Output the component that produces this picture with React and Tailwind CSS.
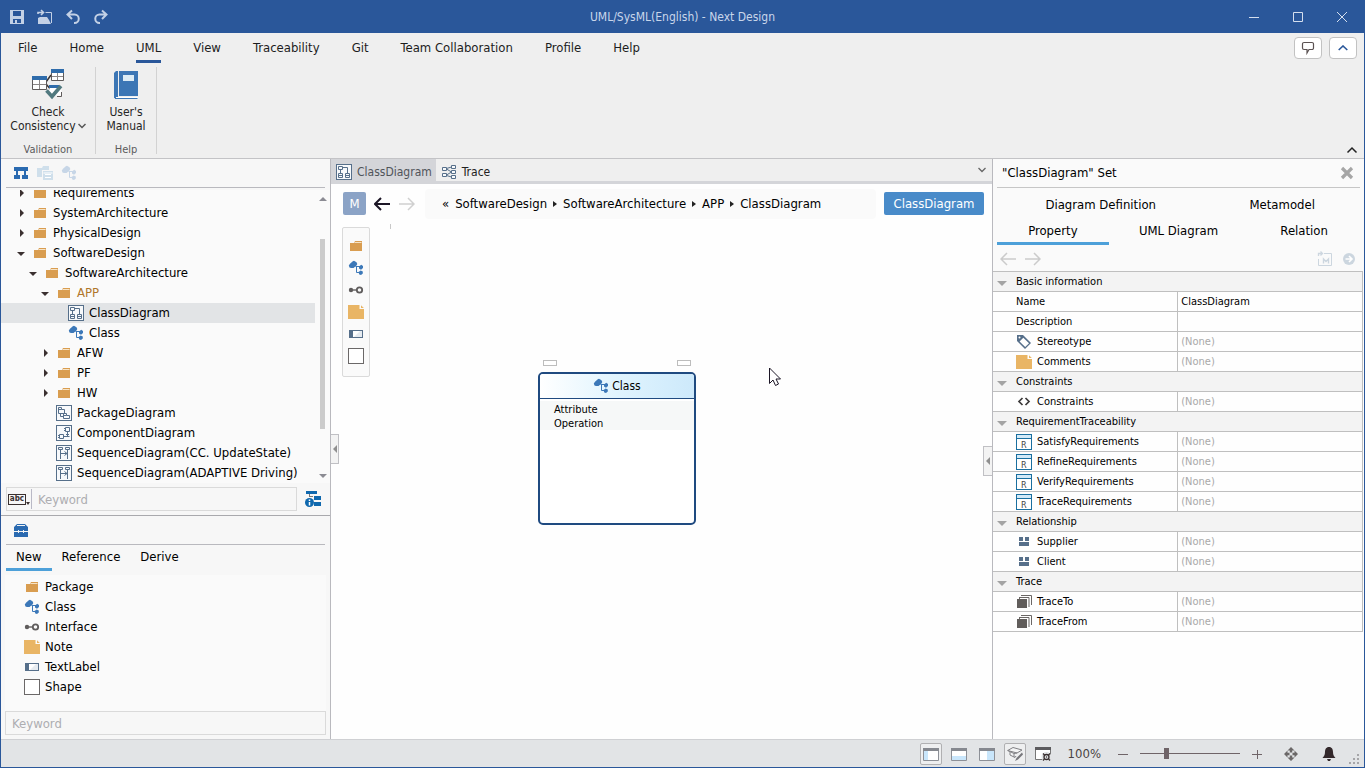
import { useState } from 'react';

const SLATE = '#566f8a';

const menus = ['File', 'Home', 'UML', 'View', 'Traceability', 'Git', 'Team Collaboration', 'Profile', 'Help'];

const treeItems = [
  { label: 'Requirements', icon: 'package', level: 0, state: 'closed' },
  { label: 'SystemArchitecture', icon: 'package', level: 0, state: 'closed' },
  { label: 'PhysicalDesign', icon: 'package', level: 0, state: 'closed' },
  { label: 'SoftwareDesign', icon: 'package', level: 0, state: 'open' },
  { label: 'SoftwareArchitecture', icon: 'package', level: 1, state: 'open' },
  { label: 'APP', icon: 'package', level: 2, state: 'open', edited: true },
  { label: 'ClassDiagram', icon: 'classDiagram', level: 3 },
  { label: 'Class', icon: 'class', level: 3 },
  { label: 'AFW', icon: 'package', level: 2, state: 'closed' },
  { label: 'PF', icon: 'package', level: 2, state: 'closed' },
  { label: 'HW', icon: 'package', level: 2, state: 'closed' },
  { label: 'PackageDiagram', icon: 'packageDiagram', level: 2 },
  { label: 'ComponentDiagram', icon: 'componentDiagram', level: 2 },
  { label: 'SequenceDiagram(CC. UpdateState)', icon: 'sequenceDiagram', level: 2 },
  { label: 'SequenceDiagram(ADAPTIVE Driving)', icon: 'sequenceDiagram', level: 2 },
];

const indents = ['pl-[15px]', 'pl-[27px]', 'pl-[39px]', 'pl-[51px]'];

const tools = [
  { label: 'Package', icon: 'package' },
  { label: 'Class', icon: 'class' },
  { label: 'Interface', icon: 'interface' },
  { label: 'Note', icon: 'note' },
  { label: 'TextLabel', icon: 'textLabel' },
  { label: 'Shape', icon: 'shape' },
];

const propertyGroups = [
  {
    title: 'Basic information',
    rows: [
      { name: 'Name', value: 'ClassDiagram' },
      { name: 'Description', value: '' },
      { name: 'Stereotype', icon: 'tag' },
      { name: 'Comments', icon: 'note' },
    ],
  },
  { title: 'Constraints', rows: [{ name: 'Constraints', icon: 'code' }] },
  {
    title: 'RequirementTraceability',
    rows: [
      { name: 'SatisfyRequirements', icon: 'requirement' },
      { name: 'RefineRequirements', icon: 'requirement' },
      { name: 'VerifyRequirements', icon: 'requirement' },
      { name: 'TraceRequirements', icon: 'requirement' },
    ],
  },
  {
    title: 'Relationship',
    rows: [
      { name: 'Supplier', icon: 'relation' },
      { name: 'Client', icon: 'relation' },
    ],
  },
  {
    title: 'Trace',
    rows: [
      { name: 'TraceTo', icon: 'stack' },
      { name: 'TraceFrom', icon: 'stack' },
    ],
  },
];

function Svg({ w = 16, h = 16, children }) {
  return (
    <svg width={w} height={h} viewBox={`0 0 ${w} ${h}`} fill="none" className="block shrink-0" aria-hidden="true">
      {children}
    </svg>
  );
}

function DiagramFrame({ children }) {
  return (
    <Svg>
      <rect x="0.5" y="0.5" width="15" height="15" fill="#f7f9fb" stroke={SLATE} />
      <g stroke={SLATE}>{children}</g>
    </Svg>
  );
}

const icons = {
  package: (
    <Svg>
      <path d="M2 5h4l1-2h7v10H2z" fill="#d99d50" />
      <path d="M6.5 4.5h7" stroke="#f6e3c6" />
    </Svg>
  ),
  class: (
    <Svg>
      <path d="M.8 5.5 2 3.7 4.800 1.200 6 .8 8.500 2.200 9.300 4 8.500 5.500 5.500 8H3L1.500 7.500zM11 6.500 13.200 4.800 15 6v2L13 9.700 11 8.500zM10.500 12l2.200-1.600 2.100 1.100v2L13 15l-1.700-.6z" fill="#3c78b8" />
      <path d="M7.500 6.500H12M8.500 6.500v6h3" stroke="#3c78b8" />
    </Svg>
  ),
  interface: (
    <Svg>
      <circle cx="3" cy="8" r="2.2" fill="#5f5c5c" />
      <path d="M5 8h4" stroke="#5f5c5c" strokeWidth="1.4" />
      <circle cx="11.5" cy="8" r="2.7" stroke="#5f5c5c" strokeWidth="1.8" />
    </Svg>
  ),
  note: (
    <Svg>
      <path d="M0 1h11.5v4H16v10H0z" fill="#e9b565" />
      <path d="M13 1.2 15.8 4H13z" fill="#e9b565" />
    </Svg>
  ),
  textLabel: (
    <Svg>
      <rect x="1.5" y="4.5" width="13" height="7" fill="#fff" stroke={SLATE} />
      <path d="M6 11 12 5h2v6z" fill="#e6ebf0" />
      <path d="M1 4h4v8H1z" fill={SLATE} />
    </Svg>
  ),
  shape: (
    <Svg>
      <rect x="0.5" y="0.5" width="15" height="15" fill="#fff" stroke="#6b6868" />
    </Svg>
  ),
  classDiagram: (
    <DiagramFrame>
      <path d="M2.5 2.5h4v3h-4zM2.5 9.5h4v4h-4zM9.5 9.5h4v4h-4zM4.5 5.5v4M6.500 3.500h5v6M2.500 11.500h4M9.500 11.500h4" />
    </DiagramFrame>
  ),
  packageDiagram: (
    <DiagramFrame>
      <path d="M2.5 2.5h3v2h3v4h-6zM2.5 4.5h3M7.5 8.5h3v2h3v3h-6zM7.5 10.5h3M4.5 8.5v3h3" />
    </DiagramFrame>
  ),
  componentDiagram: (
    <DiagramFrame>
      <path d="M9.500 2.500h4v4h-4zM8 3.500h1.500M8 5.500h1.500M3.500 9.500h4v4h-4zM2 10.500h1.500M2 12.500h1.500M7.500 11.500h6M11.500 6.500v5M10 9.500h3" />
    </DiagramFrame>
  ),
  sequenceDiagram: (
    <DiagramFrame>
      <path d="M2.5 2.5h4v2h-4zM9.5 2.5h4v2h-4zM4.5 4.5V14M11.5 4.5V14M4.5 8.5H11M8.5 6.5l2.5 2-2.5 2" />
    </DiagramFrame>
  ),
  trace: (
    <Svg>
      <g stroke={SLATE}>
        <path d="M5.500 4.500l5-1.500M5.500 5l5 3M5.500 11l5-3M5.500 11.500l5 1.500" />
        <path d="M1.500 3.500h4v3h-4zM1.500 9.500h4v3h-4zM10.500 1.500h4v3h-4zM10.500 6.500h4v3h-4zM10.500 11.500h4v3h-4z" fill="#f7f9fb" />
      </g>
    </Svg>
  ),
  tag: (
    <Svg>
      <path d="M1 1h6l8 8-6 6-8-8z" fill={SLATE} />
      <path d="m7.3 3.8 5.7 5.5L9.2 13 3.6 7.5z" fill="#fff" />
      <circle cx="3.5" cy="3.5" r="1" fill="#fff" />
    </Svg>
  ),
  code: (
    <Svg>
      <path d="M6.5 4 3 7.5 6.5 11M9.5 4 13 7.5 9.5 11" stroke="#3c3a3a" strokeWidth="1.7" />
    </Svg>
  ),
  requirement: (
    <Svg>
      <rect x="0.5" y="0.5" width="15" height="15" fill="#fff" stroke="#1a6f9f" />
      <path d="M1 1h14v3H1z" fill="#d3eaf8" />
      <path d="M1 4.5h14" stroke="#1a6f9f" />
      <text x="5" y="14" fontSize="9" fill="#444">R</text>
    </Svg>
  ),
  relation: (
    <Svg>
      <path d="M3 3h4v4H3zM9 3h4v4H9zM3 8h10v4H3z" fill={SLATE} />
    </Svg>
  ),
  stack: (
    <Svg>
      <path d="M3 3.5h10V13M5 1.5h10.5V11M3.5 3v2M5.5 1v1" stroke="#6b6765" />
      <path d="M1 5h10v9H1z" fill="#615d5b" />
    </Svg>
  ),
};

function Caret({ open }) {
  return (
    <Svg w={10} h={10}>
      {open ? <path d="M1 4h8L5 8z" fill="#3a3030" /> : <path d="M4 1 8 5 4 9z" fill="#3a3030" />}
    </Svg>
  );
}

function Arrow({ dir = 'left', color = '#d0d0d0', width = 1.4 }) {
  return (
    <Svg>
      {dir === 'left' ? (
        <path d="M16 8H1.5M7 2 1 8l6 6" stroke={color} strokeWidth={width} />
      ) : (
        <path d="M0 8h14.500M9 2l6 6-6 6" stroke={color} strokeWidth={width} />
      )}
    </Svg>
  );
}

function TitleBar() {
  return (
    <header className="h-[33px] shrink-0 grid grid-cols-[1fr_auto_1fr] items-center bg-[#2a579a] text-xs text-[#c9d6ea]">
      <div className="flex items-center gap-3 pl-2">
        <button aria-label="Save" className="flex w-4 justify-center">
          <Svg>
            <path d="M1 1h14v14H1z" fill="#c3d1e6" />
            <path d="M4 2h8v5H4zM4 10h8v4H4z" fill="#2a579a" />
            <path d="M6 11h2v3H6z" fill="#c3d1e6" />
          </Svg>
        </button>
        <button aria-label="Open" className="flex w-4 justify-center">
          <Svg>
            <path d="M1 5V3.500h5M4 1l2.500 2.500L4 6" stroke="#c3d1e6" strokeWidth="1.600" />
            <path d="M8.500 3.500h6V14" stroke="#c3d1e6" />
            <path d="M1 7v2l2-1h7l2 3 2 4H1z" fill="#c3d1e6" />
          </Svg>
        </button>
        <button aria-label="Undo" className="flex w-4 justify-center">
          <Svg>
            <path d="M7 1.500 2.500 5.500 7 10M3 5.500h6.500a4 4 0 0 1 0 8.500H9" stroke="#c3d1e6" strokeWidth="2" />
          </Svg>
        </button>
        <button aria-label="Redo" className="flex w-4 justify-center">
          <Svg>
            <path d="M9 1.500 13.500 5.500 9 10M13 5.500H6.500a4 4 0 0 0 0 8.500H7" stroke="#c3d1e6" strokeWidth="2" />
          </Svg>
        </button>
      </div>
      <h1 className="pt-px">UML/SysML(English) - Next Design</h1>
      <div className="flex justify-end">
        <button aria-label="Minimize" className="flex w-11 justify-center">
          <Svg w={12} h={12}><path d="M1 6.500h10" stroke="#d5dfee" /></Svg>
        </button>
        <button aria-label="Maximize" className="flex w-11 justify-center">
          <Svg w={12} h={12}><path d="M1.500 1.500h9v9h-9z" stroke="#d5dfee" /></Svg>
        </button>
        <button aria-label="Close" className="flex w-11 justify-center">
          <Svg w={12} h={12}><path d="m1 1 10 10M11 1 1 11" stroke="#d5dfee" /></Svg>
        </button>
      </div>
    </header>
  );
}

function Ribbon() {
  const [active, setActive] = useState('UML');
  return (
    <div className="h-[126px] shrink-0 flex flex-col bg-[#efefef] border-b border-[#c3c3c6]">
      <div className="flex items-center justify-between pl-px pr-[7px]">
        <nav className="flex">
          {menus.map((m) => (
            <button key={m} onClick={() => setActive(m)} className="px-4 text-[13px] text-[#1d1d1d]">
              <span
                className={`block h-[30px] leading-[30px] border-b-3 ${
                  m === active ? 'border-[#2a579a]' : 'border-transparent'
                }`}
              >
                {m}
              </span>
            </button>
          ))}
        </nav>
        <div className="flex gap-[7px]">
          <button aria-label="Feedback" className="w-7 h-[22px] flex items-center justify-center bg-white border border-[#c2c2c2] rounded">
            <Svg w={14} h={14}>
              <path d="M3 1.500h8a1.500 1.500 0 0 1 1.500 1.500v4A1.500 1.500 0 0 1 11 8.500H8L6 12V8.500H3A1.500 1.500 0 0 1 1.500 7V3A1.500 1.500 0 0 1 3 1.500z" stroke="#5b5252" strokeWidth="1.200" />
            </Svg>
          </button>
          <button aria-label="Hide menu" className="w-7 h-[22px] flex items-center justify-center bg-white border border-[#c2c2c2] rounded">
            <Svg w={10} h={6}><path d="M.7 5 5 1l4.300 4" stroke="#2a579a" strokeWidth="1.600" /></Svg>
          </button>
        </div>
      </div>
      <div className="flex-1 flex items-stretch py-1 pr-[6px] text-xs">
        <section className="w-[95px] flex flex-col items-center border-r border-[#d2d2d2]">
          <button className="flex flex-col items-center leading-[14px] text-[#262626]">
            <Svg w={34} h={36}>
              <path d="M15 15l5-7M15 17l6 7" stroke="#3a3535" strokeWidth="1.500" />
              <path d="M1.500 9.500h14v13h-14z" fill="#fff" stroke="#5f5b5b" />
              <path d="M8.500 13v9M2 17.500h13" stroke="#8b8787" />
              <path d="M1 9h15v4H1z" fill="#2f6cab" />
              <path d="M20.500 2.500h12v11h-12z" fill="#fff" stroke="#5f5b5b" />
              <path d="M26.500 6v7M21 9.500h11" stroke="#8b8787" />
              <path d="M20 2h13v4H20z" fill="#2f6cab" />
              <path d="M18.500 18.500h12v10h-12z" fill="#fff" />
              <path d="M18 18h10v3H18z" fill="#2f6cab" />
              <path d="M26 29.500h4.500V25" stroke="#5f5b5b" />
              <path d="m15.500 23.500 5.500 6 9-10.500" stroke="#51797f" strokeWidth="3.600" />
            </Svg>
            <span className="mt-0.5">Check</span>
            <span className="flex items-center gap-0.5">
              Consistency
              <Svg w={8} h={6}><path d="m.5 1 3.500 3.500L7.500 1" stroke="#555" strokeWidth="1.500" /></Svg>
            </span>
          </button>
          <h2 className="mt-auto text-[11px] leading-[8px] text-[#5c5c5c]">Validation</h2>
        </section>
        <section className="w-[61px] flex flex-col items-center border-r border-[#d2d2d2]">
          <button className="flex flex-col items-center leading-[14px] text-[#262626]">
            <Svg w={24} h={36}>
              <path d="M2 4h2v25.500l-1 2.500H1.500L0 30.500V6z" fill="#3c76b5" />
              <path d="M5 4h19v25H5z" fill="#3c76b5" />
              <path d="M2 30h22v1H2z" fill="#fff" />
              <path d="M1 31h22.500v1H1z" fill="#3c76b5" />
              <path d="M9 8h11v6H9z" fill="#dcebf5" />
            </Svg>
            <span className="mt-0.5">User's</span>
            <span>Manual</span>
          </button>
          <h2 className="mt-auto text-[11px] leading-[8px] text-[#5c5c5c]">Help</h2>
        </section>
        <button aria-label="Collapse ribbon" className="ml-auto self-end">
          <Svg w={12} h={8}><path d="M1.500 6.500 6 2l4.500 4.500" stroke="#222" strokeWidth="1.500" /></Svg>
        </button>
      </div>
    </div>
  );
}

function ModelTree() {
  const [selected, setSelected] = useState('ClassDiagram');
  return (
    <div className="flex-1 min-h-0 flex bg-[#fafafa]">
      <ul className="flex-1 min-w-0 flex flex-col justify-end overflow-hidden text-[13px]">
        {treeItems.map((item) => (
          <li key={item.label} className="shrink-0">
            <button
              onClick={() => setSelected(item.label)}
              className={`w-full h-5 flex items-center ${indents[item.level]} ${
                item.label === selected ? 'bg-[#e2e4e6]' : ''
              }`}
            >
              <span className="w-4">{item.state && <Caret open={item.state === 'open'} />}</span>
              <span className="mr-[5px]">{icons[item.icon]}</span>
              <span className={item.edited ? 'text-[#b0762a]' : 'text-black'}>{item.label}</span>
            </button>
          </li>
        ))}
      </ul>
      <div className="w-[15px] flex flex-col items-center justify-between pt-[6px] pb-1">
        <Svg w={8} h={5}><path d="M0 5h8L4 1z" fill="#8b8b93" /></Svg>
        <div className="w-[5px] h-[190px] bg-[#cbcbcb] -mt-2" />
        <Svg w={8} h={5}><path d="M0 0h8L4 4z" fill="#8b8b93" /></Svg>
      </div>
    </div>
  );
}

function Sidebar() {
  const [tab, setTab] = useState('New');
  return (
    <aside className="w-[330px] shrink-0 flex flex-col bg-[#f7f7f7] border-r border-[#b9b9be]">
      <div className="flex-1 min-h-0 flex flex-col">
        <div className="mx-[5px] h-[29px] shrink-0 flex items-center gap-2 pl-[7px] border-b border-[#b9b9be]">
          <button aria-label="Model tree">
            <Svg>
              <path d="M1 2h14v4H1zM1 10h6v4H1zM9 10h6v4H9zM3 6h2v4H3zM11 6h2v4h-2z" fill="#2a6ab0" />
            </Svg>
          </button>
          <button aria-label="Documents">
            <Svg>
              <path d="M0 3h5l1-2h6v4H5v7H0zM6 6h10v9H6z" fill="#cfdfeb" />
              <path d="M8 9.500h6M8 12.500h6M6.500 8h9" stroke="#fff" />
            </Svg>
          </button>
          <button aria-label="Classes" className="opacity-25">{icons.class}</button>
        </div>
        <div className="h-0.5 shrink-0" />
        <ModelTree />
        <div className="shrink-0 flex items-center gap-2 pl-[5px] pr-[9px] pt-1 pb-1">
          <div className="flex-1 h-6 flex items-center border border-[#dadada]">
            <button aria-label="Match mode" className="w-6 flex items-end justify-center">
              <span className="h-[11px] px-px border border-[#3a3030] text-[8px] leading-[8px] font-bold text-[#3a3030]">abc</span>
              <Svg w={4} h={3}><path d="M0 0h4L2 3z" fill="#3a3030" /></Svg>
            </button>
            <input
              aria-label="Search model"
              placeholder="Keyword"
              className="flex-1 min-w-0 h-5 pl-[6px] border-l border-[#b9b9c6] text-[13px] outline-none placeholder:text-[#adadb1]"
            />
          </div>
          <button aria-label="Model info">
            <Svg w={16} h={18}>
              <path d="M1 1h11v3H1zM9 6h7v4H9zM9 12h7v4H9z" fill="#0f68ae" />
              <path d="M4.500 4v3M4.500 6.500H8" stroke="#777" />
              <circle cx="4.500" cy="12.500" r="4.500" fill="#0f68ae" />
              <path d="M4.500 9.500v1.500M4.500 12v3.500" stroke="#fff" strokeWidth="1.500" />
            </Svg>
          </button>
        </div>
      </div>

      <div className="shrink-0 flex flex-col border-t border-[#a9a9ad]">
        <div className="mx-[5px] h-[29px] flex items-center pl-[7px] border-b border-[#b9b9be]">
          <button aria-label="Toolbox">
            <Svg>
              <path d="M4 2h8l3 3v4H1V5z M1 10h14v5H1z" fill="#2a6ab0" />
              <path d="M4 3.500h8M5.500 8v3M10.500 8v3M5 9.500h6" stroke="#f3f3f3" />
            </Svg>
          </button>
        </div>
        <div className="mx-[5px] flex text-[13px]">
          {['New', 'Reference', 'Derive'].map((t) => (
            <button
              key={t}
              onClick={() => setTab(t)}
              className={`px-[10px] h-[26px] border-b-3 ${t === tab ? 'border-[#4da0d9]' : 'border-transparent'}`}
            >
              {t}
            </button>
          ))}
        </div>
        <ul className="mx-1 mt-1 pl-[19px] py-0.5 h-[136px] bg-[#fafafa] text-[13px]">
          {tools.map((t) => (
            <li key={t.label}>
              <button className="h-5 flex items-center gap-[5px]">
                {icons[t.icon]}
                {t.label}
              </button>
            </li>
          ))}
        </ul>
        <input
          aria-label="Search tools"
          placeholder="Keyword"
          className="mx-1 mb-1 h-6 px-[6px] border border-[#dadada] text-[13px] outline-none placeholder:text-[#adadb1]"
        />
      </div>
    </aside>
  );
}

function BreadcrumbDot() {
  return (
    <Svg w={4} h={8}><path d="M0 1v6l4-3z" fill="#222" /></Svg>
  );
}

function Canvas() {
  return (
    <div className="relative flex-1 min-h-0 pl-[11px] pt-1">
      <div className="w-7 h-[150px] flex flex-col items-center gap-[6px] pt-[10px] bg-[#fafafa] border border-[#dadada] rounded-xs">
        {tools.map((t) => (
          <button key={t.label} aria-label={`Add ${t.label}`}>{icons[t.icon]}</button>
        ))}
      </div>
      <div className="absolute left-[59px] top-px w-px h-[5px] bg-[#c8c8c8]" />

      <div className="absolute left-[212px] top-[137px] w-[14px] h-[6px] border border-[#bdbdbd] bg-white" />
      <div className="absolute left-[346px] top-[137px] w-[14px] h-[6px] border border-[#bdbdbd] bg-white" />
      <div className="absolute left-[207px] top-[149px] w-[158px] h-[153px] flex flex-col bg-white border-2 border-[#1f4a80] rounded-[5px] overflow-hidden text-[11px]">
        <div className="h-[25px] flex items-center justify-center gap-[3px] bg-linear-to-r from-white via-[#e0f4fe] to-[#cde9fb] border-b border-[#1f4a80] text-xs">
          {icons.class}
          Class
        </div>
        <div className="mt-0.5 pl-[14px] pt-0.5 h-[29px] leading-[14px] bg-[#f6f8f8]">
          <p>Attribute</p>
          <p>Operation</p>
        </div>
      </div>

      <div className="absolute left-[438px] top-[144px]">
        <Svg w={13} h={20}>
          <path d="M.5 1v15.500l3.500-3.500 2.500 5.500 3-1.500L7 12h4.500z" fill="#fff" stroke="#1c1626" />
        </Svg>
      </div>
      <button aria-label="Collapse properties" className="absolute right-0 top-[223px] w-[9px] h-[30px] flex items-center justify-center bg-[#f3f3f3] border border-r-0 border-[#c0c0c4]">
        <Svg w={4} h={8}><path d="M4 0v8L0 4z" fill="#8f8f8f" /></Svg>
      </button>
    </div>
  );
}

function Editor() {
  return (
    <main className="relative flex-1 min-w-0 flex flex-col bg-[#fefefe]">
      <div className="h-[25px] shrink-0 flex items-stretch bg-[#efefef] border-b-3 border-[#d4d5d9] text-xs">
        <button className="flex items-center gap-[5px] pl-[5px] pr-1 pt-[3px] bg-[#d4d5d9] text-[#50545a]">
          {icons.classDiagram}
          ClassDiagram
        </button>
        <button className="flex items-center gap-[5px] px-[5px] pt-[3px] text-[#222]">
          {icons.trace}
          Trace
        </button>
        <button aria-label="Open tabs" className="ml-auto pr-[6px] flex items-center">
          <Svg w={8} h={6}><path d="m.5 1 3.500 3.500L7.500 1" stroke="#666" strokeWidth="1.300" /></Svg>
        </button>
      </div>

      <div className="h-[39px] shrink-0 flex items-center pl-3 pr-2 text-[13px]">
        <button className="w-[23px] h-[23px] rounded-xs bg-[#8ba3c6] text-white">M</button>
        <button aria-label="Back" className="ml-2"><Arrow color="#1c1626" width={2} /></button>
        <button aria-label="Forward" className="ml-[9px]"><Arrow dir="right" width={1.500} /></button>
        <nav className="ml-[10px] flex-1 min-w-0 h-[30px] flex items-center gap-[6px] pl-[17px] rounded-sm bg-[#fafafa] whitespace-nowrap">
          <span>«</span>
          <a href="#software-design">SoftwareDesign</a>
          <BreadcrumbDot />
          <a href="#software-architecture">SoftwareArchitecture</a>
          <BreadcrumbDot />
          <a href="#app">APP</a>
          <BreadcrumbDot />
          <a href="#class-diagram">ClassDiagram</a>
        </nav>
        <button className="ml-2 w-[100px] h-[23px] pt-px rounded-xs bg-[#498bc9] text-white">ClassDiagram</button>
      </div>

      <Canvas />

      <button aria-label="Collapse tree" className="absolute left-0 top-[275px] w-2 h-[30px] flex items-center justify-center bg-[#f3f3f3] border border-l-0 border-[#c0c0c4]">
        <Svg w={4} h={8}><path d="M4 0v8L0 4z" fill="#8f8f8f" /></Svg>
      </button>
    </main>
  );
}

function Inspector() {
  const [tab, setTab] = useState('Property');
  const tabClass = (t) => `h-[26px] border-b-3 ${t === tab ? 'border-[#4da0d9]' : 'border-transparent'}`;
  return (
    <aside className="w-[372px] shrink-0 flex flex-col bg-[#fafafa] border-l border-[#b9b9be]">
      <div className="mx-1 h-[29px] flex items-center justify-between pl-[5px] pr-[6px] border-b border-[#c6c6c6] text-[13px]">
        <h2>"ClassDiagram" Set</h2>
        <button aria-label="Close panel">
          <Svg w={14} h={14}><path d="m2 2 10 10M12 2 2 12" stroke="#a6a6a6" strokeWidth="3.200" /></Svg>
        </button>
      </div>
      <div className="mx-1 pt-[5px] text-[13px]">
        <div className="grid grid-cols-[4fr_3fr]">
          {['Diagram Definition', 'Metamodel'].map((t) => (
            <button key={t} onClick={() => setTab(t)} className={tabClass(t)}>{t}</button>
          ))}
        </div>
        <div className="grid grid-cols-[4fr_5fr_4fr]">
          {['Property', 'UML Diagram', 'Relation'].map((t) => (
            <button key={t} onClick={() => setTab(t)} className={tabClass(t)}>{t}</button>
          ))}
        </div>
      </div>
      <div className="h-[26px] shrink-0 flex items-center gap-[9px] pl-[7px] pr-2 pt-0.5">
        <button aria-label="Previous"><Arrow color="#cbcbcb" width={1.500} /></button>
        <button aria-label="Next"><Arrow dir="right" color="#cbcbcb" width={1.500} /></button>
        <button aria-label="Metamodel view" className="ml-auto">
          <Svg>
            <path d="M7 2.500h7.500v12h-13V8" stroke="#ccd6df" />
            <path d="M1.500 5V2.500h3M3.500.500l2 2-2 2" stroke="#ccd6df" strokeWidth="1.300" />
            <path d="M6.500 12.500V8l2.500 2.500L11.500 8v4.500" stroke="#ccd6df" strokeWidth="1.400" />
          </Svg>
        </button>
        <button aria-label="Go to">
          <Svg w={14} h={14}>
            <circle cx="7" cy="7" r="6" fill="#ccd6df" />
            <path d="M3.500 7h6M7 4l3 3-3 3" stroke="#fff" strokeWidth="1.600" />
          </Svg>
        </button>
      </div>
      <div className="flex-1 min-h-0 bg-[#fefefe]">
        <table className="w-[370px] table-fixed border-collapse border-y border-r border-[#bfbfbf] text-[11px] text-left">
          <colgroup>
            <col className="w-1/2" />
            <col className="w-1/2" />
          </colgroup>
          {propertyGroups.map((g) => (
            <tbody key={g.title}>
              <tr className="h-5 bg-[#f3f3f3] border-t border-[#bfbfbf]">
                <th colSpan={2} className="p-0 font-normal">
                  <button className="h-[19px] flex items-center gap-[9px] pl-1 pt-px leading-[18px]">
                    <Svg w={10} h={10}><path d="M0 4h10L5 9z" fill="#a3a3a3" /></Svg>
                    {g.title}
                  </button>
                </th>
              </tr>
              {g.rows.map((r) => (
                <tr key={r.name} className="h-5 border-t border-[#bfbfbf]">
                  <th className="p-0 pl-[23px] font-normal">
                    <div className="h-[19px] flex items-center gap-[5px]">
                      {r.icon && icons[r.icon]}
                      <span className="pt-0.5">{r.name}</span>
                    </div>
                  </th>
                  <td className="p-0 pl-[3px] border-l border-[#bfbfbf] leading-[18px]">
                    {r.icon ? <span className="text-[#a9a9a9]">(None)</span> : r.value}
                  </td>
                </tr>
              ))}
            </tbody>
          ))}
        </table>
      </div>
    </aside>
  );
}

function PaneIcon({ d }) {
  return (
    <Svg>
      <path d="M.5 2.500h15v12H.500z" fill="#fff" stroke="#8d9097" />
      <path d="M0 2h16v3H0z" fill="#85888f" />
      <path d={d} fill="#c9e6fb" />
    </Svg>
  );
}

function StatusBar() {
  const [zoom, setZoom] = useState(25);
  return (
    <footer className="h-7 shrink-0 flex items-center justify-end pr-[3px] bg-[#e2e4e6] border-t border-[#cfd0d3] text-[13px] text-[#4a4444]">
      <button aria-label="Left pane" className="w-[22px] h-[22px] flex items-center justify-center border border-[#b0b0b2] rounded-xs bg-[#eeeff0]">
        <PaneIcon d="M1 5h4v9H1z" />
      </button>
      <button aria-label="Bottom pane" className="ml-[6px] w-[22px] flex justify-center"><PaneIcon d="M1 10h14v4H1z" /></button>
      <button aria-label="Right pane" className="ml-[6px] w-[22px] flex justify-center"><PaneIcon d="M8 5h7v9H8z" /></button>
      <button aria-label="Highlight" className="ml-[6px] w-[22px] h-[22px] flex items-center justify-center border border-[#b0b0b2] rounded-xs bg-[#eeeff0]">
        <Svg>
          <path d="M.7 4.500 6 1.500l9 2.500-5 3zM.7 4.500 7 7.500l3-.5M3 6v3l5 2.500 1-1.500M7 7.500V11" stroke="#808084" fill="#f3f4f5" />
          <path d="M15 6.500 9.500 12 8 15l3-1.500 5-5z" fill="#77777b" />
        </Svg>
      </button>
      <button aria-label="View settings" className="ml-[6px] w-[22px] flex justify-center">
        <Svg>
          <path d="M.5 1.500h15v12H.500z" fill="#fff" stroke="#777" />
          <path d="M0 1h16v3H0z" fill="#5c5c5f" />
          <circle cx="11.500" cy="11" r="5" fill="#e2e4e6" />
          <circle cx="11.500" cy="11" r="2.500" stroke="#3a3030" strokeWidth="1.300" />
          <path d="m8 7.500 1.500 1.500M13.500 13l1.500 1.500M15 7.500 13.500 9M9.500 13 8 14.500" stroke="#3a3030" strokeWidth="1.200" />
          <circle cx="11.500" cy="11" r=".7" fill="#3a3030" />
        </Svg>
      </button>
      <span className="ml-[14px] pt-px">100%</span>
      <button aria-label="Zoom out" className="ml-[17px]">
        <Svg w={10} h={10}><path d="M0 5.500h10" stroke="#6f6468" /></Svg>
      </button>
      <input
        type="range"
        aria-label="Zoom"
        value={zoom}
        onChange={(e) => setZoom(e.target.value)}
        className="ml-3 w-[100px] h-3 appearance-none bg-[linear-gradient(#6f6468,#6f6468)] bg-[length:100%_1px] bg-center bg-no-repeat [&::-webkit-slider-thumb]:appearance-none [&::-webkit-slider-thumb]:w-[5px] [&::-webkit-slider-thumb]:h-[11px] [&::-webkit-slider-thumb]:bg-[#6f6468]"
      />
      <button aria-label="Zoom in" className="ml-3">
        <Svg w={10} h={10}><path d="M0 5.500h10M5.500 1v9" stroke="#6f6468" /></Svg>
      </button>
      <button aria-label="Fit" className="ml-[21px]">
        <Svg>
          <path d="M8 1l3.500 3.500H9.200v2H6.800v-2H4.500zM8 15l3.500-3.500H9.200v-2H6.800v2H4.500zM1 8l3.500-3.500v2.300h2v2.400h-2v2.300zM15 8l-3.500-3.500v2.300h-2v2.400h2v2.300z" fill="#6b6868" />
        </Svg>
      </button>
      <button aria-label="Notifications" className="ml-[22px]">
        <Svg>
          <path d="M8 1C5 1 4 3.500 4 6c0 3-1 4.500-2.500 6h13C13 10.500 12 9 12 6c0-2.500-1-5-4-5z" fill="#33282b" />
          <path d="M6 13h4l-1 2H7z" fill="#33282b" />
        </Svg>
      </button>
      <div className="ml-3 self-end pb-px">
        <Svg w={12} h={12}>
          <path d="M8 0h2v2H8zM8 4h2v2H8zM4 4h2v2H4zM8 8h2v2H8zM4 8h2v2H4zM0 8h2v2H0z" fill="#a5a5a8" />
        </Svg>
      </div>
    </footer>
  );
}

export default function App() {
  return (
    <div className="h-screen flex flex-col border-x border-b border-[#2a579a] bg-[#efefef] text-black font-['DejaVu_Sans_Condensed','DejaVu_Sans',sans-serif]">
      <TitleBar />
      <Ribbon />
      <div className="flex-1 min-h-0 flex">
        <Sidebar />
        <Editor />
        <Inspector />
      </div>
      <StatusBar />
    </div>
  );
}
